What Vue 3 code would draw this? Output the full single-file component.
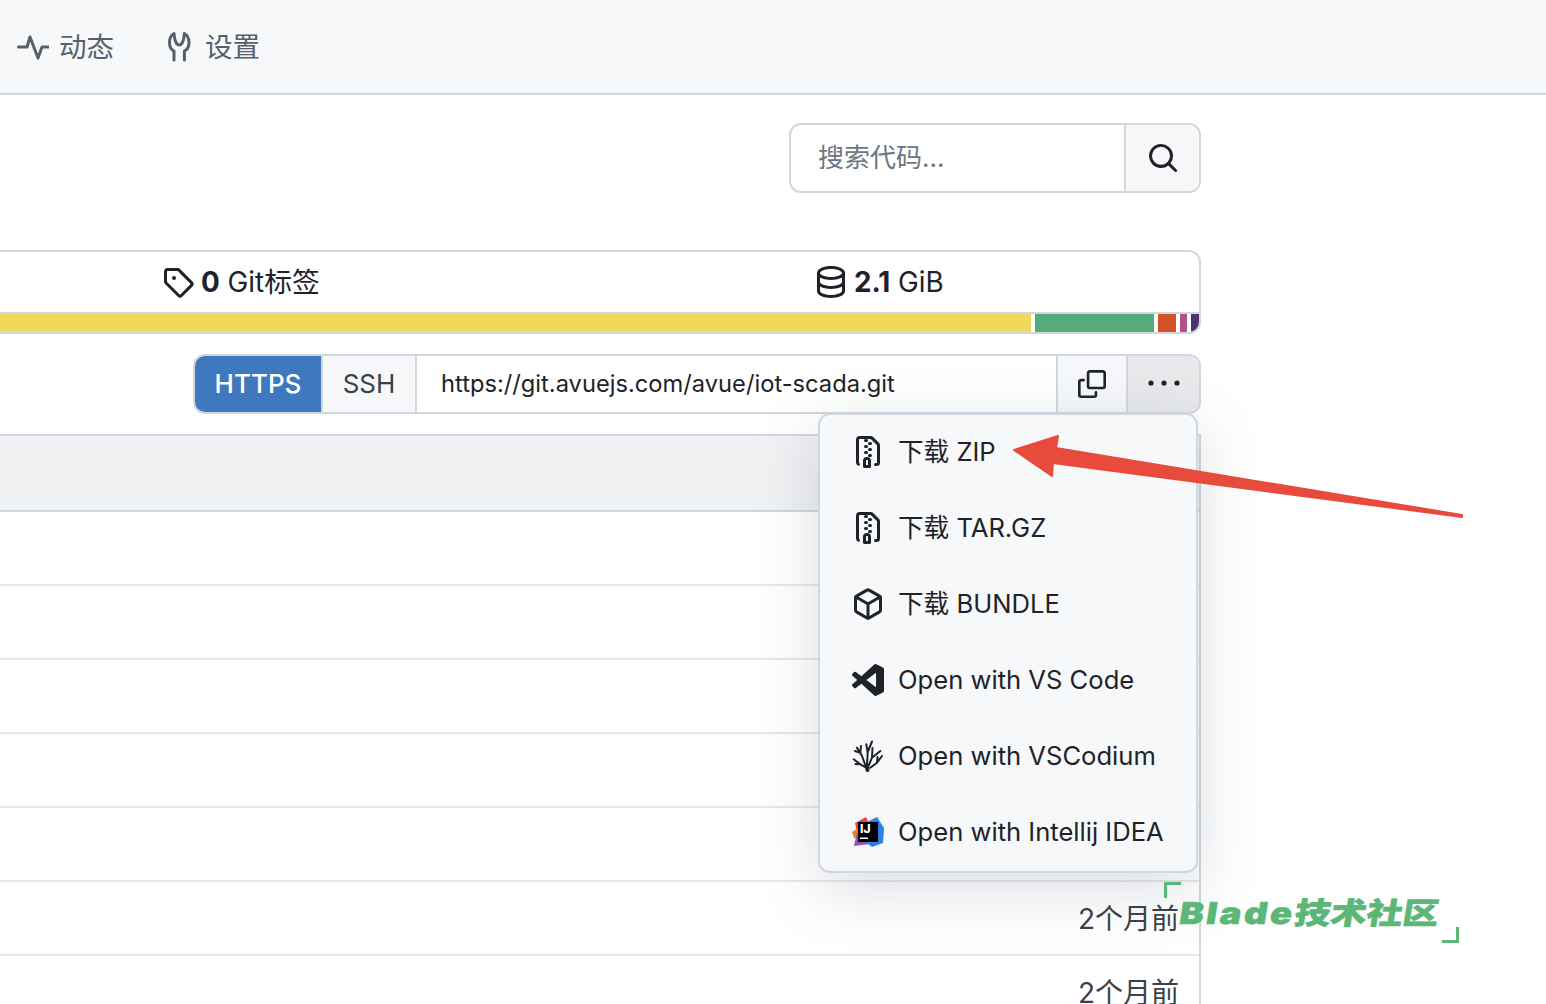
<template>
  <div class="page">
    <nav class="topnav">
      <a class="nav-item">
        <svg class="nav-icon" width="32" height="32" viewBox="0 0 32 32" fill="none" stroke="currentColor" stroke-width="3" stroke-linecap="round" stroke-linejoin="round"><polyline points="1.5,16 10,16 13,6 21,27 25,16 31,16" /></svg>
        <span>动态</span>
      </a>
      <a class="nav-item">
        <svg class="nav-icon" width="28" height="32" viewBox="0 0 28 32" fill="none" stroke="currentColor" stroke-width="3" stroke-linecap="round" stroke-linejoin="round"><path d="M7 29 V20 C3.800 18.500 2.500 15 2.500 11.500 C2.500 7.500 4.200 4 7 2.500 C7.500 6 7.500 9 8.800 11 C9.800 13 11 14 12.200 14 C13.400 14 14.600 13 15.600 11 C16.900 9 16.900 6 17.400 2.500 C20.200 4 22 7.500 22 11.500 C22 15 20.600 18.500 17.400 20 V29" /></svg>
        <span>设置</span>
      </a>
    </nav>

    <main class="content">
      <div class="search-row">
        <div class="search">
          <div class="search-input">搜索代码...</div>
          <button class="search-btn">
            <svg width="32" height="32" viewBox="0 0 16 16" fill="currentColor"><path d="M10.68 11.74a6 6 0 0 1-7.922-8.982 6 6 0 0 1 8.982 7.922l3.04 3.04a.749.749 0 0 1-.326 1.275.749.749 0 0 1-.734-.215ZM11.5 7a4.499 4.499 0 1 0-8.997 0A4.499 4.499 0 0 0 11.5 7Z" /></svg>
          </button>
        </div>
      </div>

      <section class="stats">
        <div class="stats-row">
          <div class="stat stat-tags">
            <svg width="32" height="32" viewBox="0 0 16 16" fill="currentColor"><path d="M1 7.775V2.75C1 1.784 1.784 1 2.75 1h5.025c.464 0 .91.184 1.238.513l6.25 6.25a1.75 1.75 0 0 1 0 2.474l-5.026 5.026a1.75 1.75 0 0 1-2.474 0l-6.25-6.25A1.752 1.752 0 0 1 1 7.775Zm1.5 0c0 .066.026.13.073.177l6.25 6.25a.25.25 0 0 0 .354 0l5.025-5.025a.25.25 0 0 0 0-.354l-6.25-6.25a.25.25 0 0 0-.177-.073H2.75a.25.25 0 0 0-.25.25ZM6 5a1 1 0 1 1 0 2 1 1 0 0 1 0-2Z" /></svg>
            <span><b>0</b> Git标签</span>
          </div>
          <div class="stat stat-size">
            <svg width="32" height="32" viewBox="0 0 16 16" fill="currentColor"><path d="M1 3.5c0-.626.292-1.165.7-1.59.406-.422.956-.767 1.579-1.041C4.525.32 6.195 0 8 0c1.805 0 3.475.32 4.722.869.622.274 1.172.62 1.578 1.04.408.426.7.965.7 1.591v9c0 .626-.292 1.165-.7 1.59-.406.422-.956.767-1.579 1.041C11.476 15.68 9.806 16 8 16c-1.805 0-3.475-.32-4.721-.869-.623-.274-1.173-.62-1.579-1.04-.408-.426-.7-.965-.7-1.591Zm1.5 0c0 .133.058.318.282.551.227.237.591.483 1.101.707C4.898 5.205 6.353 5.5 8 5.500c1.646 0 3.101-.295 4.118-.742.508-.224.873-.471 1.100-.708.224-.232.282-.417.282-.55 0-.133-.058-.318-.282-.551-.227-.237-.591-.483-1.101-.707C11.102 1.795 9.647 1.500 8 1.500c-1.646 0-3.101.295-4.118.742-.508.224-.873.471-1.100.708-.224.232-.282.417-.282.55Zm0 4.500c0 .133.058.318.282.551.227.237.591.483 1.101.707C4.898 9.705 6.353 10 8 10c1.646 0 3.101-.295 4.118-.742.508-.224.873-.471 1.100-.708.224-.232.282-.417.282-.55V5.724c-.241.15-.503.286-.778.407C11.475 6.68 9.805 7 8 7c-1.805 0-3.475-.32-4.721-.869a6.15 6.15 0 0 1-.779-.407Zm0 2.225V12.500c0 .133.058.318.282.55.227.237.592.484 1.100.708 1.016.447 2.471.742 4.118.742 1.647 0 3.102-.295 4.117-.742.51-.224.874-.47 1.101-.707.224-.233.282-.418.282-.551v-2.275c-.241.15-.503.285-.778.406-1.247.549-2.917.869-4.722.869-1.805 0-3.475-.32-4.721-.869a6.327 6.327 0 0 1-.779-.406Z" /></svg>
            <span><b>2.1</b> GiB</span>
          </div>
        </div>
        <div class="lang-bar">
          <span v-for="lang in languages" :key="lang.color" class="lang" :style="{ width: lang.width + 'px', background: lang.color }"></span>
        </div>
      </section>

      <div class="clone-row">
        <button class="proto active">HTTPS</button>
        <button class="proto">SSH</button>
        <div class="clone-url">https://git.avuejs.com/avue/iot-scada.git</div>
        <button class="icon-btn copy">
          <svg width="28" height="28" viewBox="0 0 16 16" fill="currentColor"><path d="M0 6.75C0 5.784.784 5 1.75 5h1.5a.75.75 0 0 1 0 1.5h-1.5a.25.25 0 0 0-.25.25v7.5c0 .138.112.25.25.25h7.5a.25.25 0 0 0 .25-.25v-1.5a.75.75 0 0 1 1.5 0v1.5A1.75 1.75 0 0 1 9.25 16h-7.5A1.75 1.75 0 0 1 0 14.25Z" /><path d="M5 1.75C5 .784 5.784 0 6.750 0h7.5C15.216 0 16 .784 16 1.750v7.5A1.75 1.75 0 0 1 14.25 11h-7.5A1.75 1.75 0 0 1 5 9.25Zm1.75-.25a.25.25 0 0 0-.25.25v7.5c0 .138.112.25.25.25h7.5a.25.25 0 0 0 .25-.25v-7.500a.25.25 0 0 0-.25-.25Z" /></svg>
        </button>
        <button class="icon-btn more">
          <svg width="32" height="32" viewBox="0 0 16 16" fill="currentColor"><circle cx="1.500" cy="7.500" r="1.300" /><circle cx="8" cy="7.500" r="1.300" /><circle cx="14.500" cy="7.500" r="1.300" /></svg>
        </button>

        <ul class="menu">
          <li v-for="item in menuItems" :key="item.label" class="menu-item">
            <span class="menu-icon">
              <svg v-if="item.icon === 'zip'" width="32" height="32" viewBox="0 0 16 16" fill="currentColor"><path d="M3.5 1.750v11.500c0 .09.048.173.126.217a.75.75 0 0 1-.752 1.298A1.748 1.748 0 0 1 2 13.250V1.750C2 .784 2.784 0 3.750 0h5.586c.464 0 .909.185 1.237.513l2.914 2.914c.329.328.513.773.513 1.237v8.586A1.750 1.750 0 0 1 12.250 15h-.5a.75.75 0 0 1 0-1.500h.5a.25.25 0 0 0 .25-.25V4.664a.25.25 0 0 0-.073-.177L9.513 1.573a.25.25 0 0 0-.177-.073H7.250a.75.75 0 0 1 0 1.500h-.5a.75.75 0 0 1 0-1.500h-3a.25.25 0 0 0-.25.25Zm3.750 8.750h.5c.966 0 1.750.784 1.750 1.750v3a.75.75 0 0 1-.75.75h-2.500a.75.75 0 0 1-.75-.75v-3c0-.966.784-1.750 1.750-1.750ZM6 5.250a.75.75 0 0 1 .75-.75h.5a.75.75 0 0 1 0 1.500h-.5A.75.75 0 0 1 6 5.250Zm.75 2.250h.5a.75.75 0 0 1 0 1.500h-.5a.75.75 0 0 1 0-1.500ZM8 6.750A.75.75 0 0 1 8.750 6h.5a.75.75 0 0 1 0 1.500h-.5A.75.75 0 0 1 8 6.750ZM8.750 3h.5a.75.75 0 0 1 0 1.500h-.5a.75.75 0 0 1 0-1.500ZM8 9.750A.75.75 0 0 1 8.750 9h.5a.75.75 0 0 1 0 1.500h-.5A.75.75 0 0 1 8 9.750Zm-1 2.500v2.250h1v-2.250a.25.25 0 0 0-.25-.25h-.5a.25.25 0 0 0-.25.25Z" /></svg>
              <svg v-else-if="item.icon === 'package'" width="32" height="32" viewBox="0 0 16 16" fill="currentColor"><path d="m8.878.392 5.250 3.045c.54.314.872.89.872 1.514v6.098a1.750 1.750 0 0 1-.872 1.514l-5.250 3.045a1.750 1.750 0 0 1-1.756 0l-5.250-3.045A1.750 1.750 0 0 1 1 11.049V4.951c0-.624.332-1.201.872-1.514L7.122.392a1.750 1.750 0 0 1 1.756 0ZM7.875 1.690l-4.630 2.685L8 7.133l4.755-2.758-4.630-2.685a.248.248 0 0 0-.25 0ZM2.500 5.677v5.372c0 .09.047.171.125.216l4.625 2.683V8.432Zm6.250 8.271 4.625-2.683a.25.25 0 0 0 .125-.216V5.677L8.750 8.432Z" /></svg>
              <svg v-else-if="item.icon === 'vscode'" width="32" height="32" viewBox="0 0 24 24" fill="currentColor"><path d="M23.150 2.587L18.210.21a1.494 1.494 0 0 0-1.705.29l-9.460 8.630-4.120-3.128a.999.999 0 0 0-1.276.057L.327 7.261A1 1 0 0 0 .326 8.740L3.899 12 .326 15.260a1 1 0 0 0 .001 1.479L1.650 17.940a.999.999 0 0 0 1.276.057l4.120-3.128 9.460 8.630a1.492 1.492 0 0 0 1.704.29l4.942-2.377A1.500 1.500 0 0 0 24 20.060V3.939a1.500 1.500 0 0 0-.85-1.352zm-5.146 14.861L10.826 12l7.178-5.448v10.896z" /></svg>
              <svg v-else-if="item.icon === 'vscodium'" width="32" height="32" viewBox="0 0 32 32" fill="none" stroke="currentColor" stroke-linecap="round" stroke-linejoin="round"><path stroke-width="4" d="M15.500 30 L15 26" /><path stroke-width="2" d="M15 28 L8.300 24.300 L1.700 19.300 M3.500 24 L8.300 24.300 M14 27 L10 16 L5 7.700 M10 16 L8.300 12.700 L3 11 M8.300 12.700 L9 6 M15 25 L15.700 12.700 L14.300 4.300 M15.700 12 L20 1.500 M16.500 26 L20 17.700 L28.300 11 M20 17.700 L20.500 8 M18.300 27.700 L25 22.700 L30 16 M25 22.700 L25.500 17" /></svg>
              <svg v-else width="32" height="32" viewBox="0 0 32 32"><polygon points="3,7 14,1 18,10 6,20" fill="#ee3d5e" /><polygon points="0,16 6,12 9,22 2,22" fill="#f58220" /><polygon points="2,30 5,16 18,28" fill="#9a4cb0" /><polygon points="15,6 25,1 32,12 31,27 20,31 12,25" fill="#2f7fe8" /><rect x="6" y="6" width="20" height="20" fill="#000" /><rect x="8" y="21.500" width="8" height="1.500" fill="#fff" /><text x="8" y="17" class="ij">IJ</text></svg>
            </span>
            <span>{{ item.label }}</span>
          </li>
        </ul>
      </div>

      <section class="files">
        <div class="files-head"></div>
        <div v-for="row in rows" :key="row.id" class="file-row">
          <span v-if="row.time" class="file-time">{{ row.time }}</span>
        </div>
      </section>
    </main>

    <svg class="arrow" width="1546" height="1004" viewBox="0 0 1546 1004">
      <polygon points="1014,450 1058,436 1056,448 1462,515 1462,517 1053,463 1052,476" fill="#e84a3c" stroke="#e84a3c" stroke-width="2" stroke-linejoin="round" />
    </svg>

    <div class="watermark">
      <span class="mark-tl"></span>
      <span class="mark-text"><span class="mark-latin">Blade</span>技术社区</span>
      <span class="mark-br"></span>
    </div>
  </div>
</template>

<script setup>
const languages = [
  { width: 1031, color: '#efd95c' },
  { width: 119, color: '#55ab7a' },
  { width: 18, color: '#d25127' },
  { width: 7, color: '#b2548a' },
  { width: 8, color: '#4a3572' }
]

const menuItems = [
  { label: '下载 ZIP', icon: 'zip' },
  { label: '下载 TAR.GZ', icon: 'zip' },
  { label: '下载 BUNDLE', icon: 'package' },
  { label: 'Open with VS Code', icon: 'vscode' },
  { label: 'Open with VSCodium', icon: 'vscodium' },
  { label: 'Open with Intellij IDEA', icon: 'idea' }
]

const rows = [
  { id: 1 },
  { id: 2 },
  { id: 3 },
  { id: 4 },
  { id: 5 },
  { id: 6, time: '2个月前' },
  { id: 7, time: '2个月前' }
]
</script>

<style>
html,
body {
  margin: 0;
  background: #fff;
  overflow: hidden;
}
</style>

<style scoped>
.page {
  position: relative;
  height: 1004px;
  overflow: hidden;
  font-family: Inter, "Noto Sans CJK SC", sans-serif;
  font-size: 26px;
  line-height: 36px;
  color: #1f2328;
}

.topnav {
  display: flex;
  align-items: center;
  gap: 53px;
  height: 93px;
  padding-left: 17px;
  background: #f6f8fa;
  border-bottom: 2px solid #d0d7de;
}

.nav-item {
  display: flex;
  align-items: center;
  gap: 10px;
  font-size: 27.500px;
  color: #57606a;
}

.nav-icon {
  flex: none;
}

.content {
  width: 1201px;
}

.search-row {
  display: flex;
  justify-content: flex-end;
  padding-top: 28px;
}

.search {
  display: flex;
  width: 412px;
  height: 70px;
  box-sizing: border-box;
  border: 2px solid #d0d7de;
  border-radius: 12px;
  overflow: hidden;
}

.search-input {
  flex: 1;
  display: flex;
  align-items: center;
  padding-left: 27px;
  color: #6e7781;
}

.search-btn {
  width: 75px;
  border: 0;
  border-left: 2px solid #d0d7de;
  background: #f6f8fa;
  color: #1f2328;
  padding: 0;
  display: flex;
  align-items: center;
  justify-content: center;
}

.stats {
  margin-top: 57px;
  border: 2px solid #d0d7de;
  border-left: 0;
  border-top-right-radius: 12px;
  border-bottom-right-radius: 12px;
  overflow: hidden;
}

.stats-row {
  display: flex;
  align-items: center;
  height: 60px;
  padding-left: 162px;
  font-size: 27.800px;
}

.stat {
  display: flex;
  align-items: center;
  gap: 7px;
}

.stat b {
  font-weight: 700;
}

.stat-tags {
  width: 653px;
}

.lang-bar {
  display: flex;
  gap: 4px;
  height: 18px;
  border-top: 2px solid #d0d7de;
}

.lang {
  display: block;
  flex: none;
}

.clone-row {
  position: relative;
  display: flex;
  height: 60px;
  box-sizing: border-box;
  margin: 20px 0 0 193px;
  border: 2px solid #d0d7de;
  border-radius: 12px;
}

.proto {
  border: 0;
  border-right: 2px solid #d0d7de;
  padding: 0;
  width: 94px;
  background: #f6f8fa;
  font: inherit;
  color: #3a4149;
}

.proto.active {
  width: 128px;
  color: #fff;
  font-weight: 500;
  background: #4078c0;
  border-top-left-radius: 10px;
  border-bottom-left-radius: 10px;
}

.clone-url {
  flex: 1;
  display: flex;
  align-items: center;
  padding-left: 24px;
  font-size: 23.700px;
}

.icon-btn {
  border: 0;
  border-left: 2px solid #d0d7de;
  padding: 0;
  display: flex;
  align-items: center;
  justify-content: center;
  color: #1f2328;
}

.copy {
  width: 70px;
  background: #f6f8fa;
}

.more {
  width: 73px;
  background: #e9e9ec;
  border-top-right-radius: 10px;
  border-bottom-right-radius: 10px;
}

.menu {
  position: absolute;
  z-index: 2;
  top: 57px;
  right: 1px;
  width: 380px;
  box-sizing: border-box;
  margin: 0;
  padding: 0;
  list-style: none;
  background: #f6f8fa;
  border: 2px solid #d0d7de;
  border-radius: 12px;
  box-shadow: 0 16px 64px rgba(90, 100, 115, 0.22);
}

.menu-item {
  display: flex;
  align-items: center;
  gap: 14px;
  height: 76px;
  box-sizing: border-box;
  padding: 0 0 2px 32px;
  font-size: 25.600px;
  white-space: nowrap;
}

.menu-icon {
  display: flex;
  flex: none;
  width: 32px;
  height: 32px;
}

.ij {
  font-family: Inter, sans-serif;
  font-size: 12px;
  font-weight: 800;
  fill: #fff;
}

.files {
  margin-top: 20px;
  border-top: 2px solid #d0d7de;
  border-right: 2px solid #d0d7de;
}

.files-head {
  height: 74px;
  background: #f0f1f3;
  border-bottom: 2px solid #d0d7de;
}

.file-row {
  display: flex;
  align-items: center;
  justify-content: flex-end;
  height: 72px;
  padding-right: 20px;
  border-bottom: 2px solid #e4e7ec;
}

.file-time {
  padding-top: 2px;
  font-size: 28px;
  color: #3a4149;
}

.arrow {
  position: absolute;
  top: 0;
  left: 0;
  z-index: 3;
  pointer-events: none;
}

.watermark {
  position: absolute;
  z-index: 4;
  left: 1164px;
  top: 882px;
  width: 295px;
  height: 61px;
}

.mark-tl,
.mark-br {
  position: absolute;
  width: 14px;
  height: 13px;
  border: 0 solid #5cb777;
}

.mark-tl {
  top: 0;
  left: 0;
  border-width: 3px 0 0 3px;
}

.mark-br {
  right: 0;
  bottom: 0;
  border-width: 0 3px 3px 0;
}

.mark-text {
  position: absolute;
  left: 16px;
  top: 10px;
  font-size: 30px;
  line-height: 42px;
  font-weight: 900;
  white-space: nowrap;
  color: #5cb777;
  -webkit-text-stroke: 0.6px #5cb777;
  transform: skewX(-9deg) scaleX(1.2);
  transform-origin: left center;
}

.mark-latin {
  letter-spacing: 2.300px;
}
</style>
